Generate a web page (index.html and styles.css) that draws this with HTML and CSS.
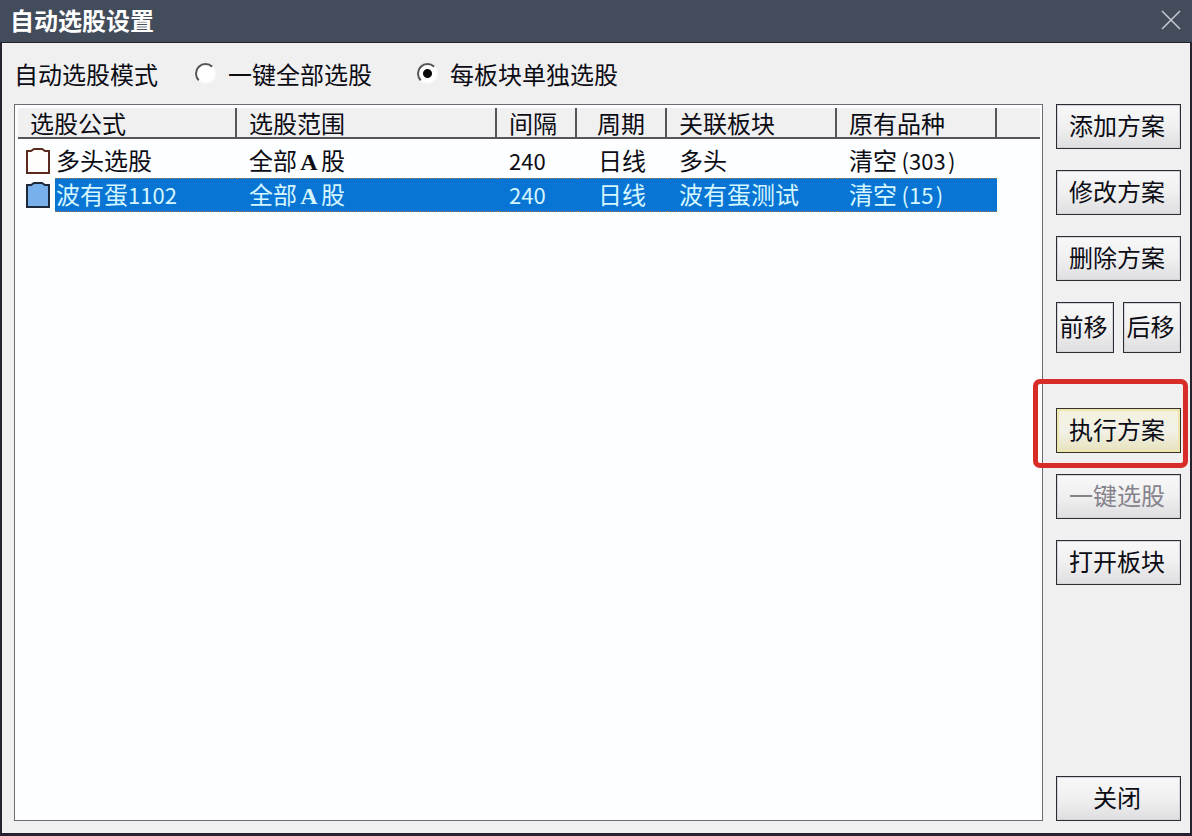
FILE: index.html
```
<!DOCTYPE html>
<html lang="zh-CN">
<head>
    <meta charset="UTF-8">
    <meta name="viewport" content="width=device-width, initial-scale=1.0">
    <title>自动选股设置</title>
    <link rel="stylesheet" href="styles.css">
</head>
<body>
    <div class="titlebar">
        <h1>自动选股设置</h1>
        <button type="button" class="close-icon" aria-label="关闭窗口">
            <svg width="20" height="20" viewBox="0 0 20 20">
                <path d="M1 1L19 19M19 1L1 19" stroke="#c8ccd4" stroke-width="1.5" fill="none"/>
            </svg>
        </button>
    </div>

    <div class="dialog">
        <div class="mode" role="radiogroup" aria-labelledby="mode-label">
            <span id="mode-label" class="mode-label">自动选股模式</span>
            <div class="option">
                <input type="radio" name="mode" id="mode-all">
                <label for="mode-all">一键全部选股</label>
            </div>
            <div class="option">
                <input type="radio" name="mode" id="mode-single" checked>
                <label for="mode-single">每板块单独选股</label>
            </div>
        </div>

        <div class="content">
            <div class="list">
                <table>
                    <colgroup>
                        <col class="col-icon">
                        <col class="col-formula">
                        <col class="col-range">
                        <col class="col-interval">
                        <col class="col-period">
                        <col class="col-block">
                        <col class="col-origin">
                        <col>
                    </colgroup>
                    <thead>
                        <tr>
                            <th colspan="2">选股公式</th>
                            <th>选股范围</th>
                            <th>间隔</th>
                            <th class="center">周期</th>
                            <th>关联板块</th>
                            <th>原有品种</th>
                            <th></th>
                        </tr>
                    </thead>
                    <tbody>
                        <tr>
                            <td class="icon">
                                <svg width="24" height="26" viewBox="0 0 24 26">
                                    <path d="M1 3H5L8 1H16L19 3H23V25H1Z" fill="#fffdfa" stroke="#5a2a1c" stroke-width="2"/>
                                </svg>
                            </td>
                            <td class="name">多头选股</td>
                            <td>全部<span class="wide">A</span>股</td>
                            <td><span class="num">240</span></td>
                            <td class="center">日线</td>
                            <td>多头</td>
                            <td>清空<span class="num"><span class="open">(</span>303<span class="shut">)</span></span></td>
                            <td class="blank"></td>
                        </tr>
                        <tr class="selected">
                            <td class="icon">
                                <svg width="24" height="26" viewBox="0 0 24 26">
                                    <path d="M1 3H5L8 1H16L19 3H23V25H1Z" fill="#77b0ea" stroke="#1c2a3c" stroke-width="2"/>
                                </svg>
                            </td>
                            <td class="name">波有蛋<span class="num">1102</span></td>
                            <td>全部<span class="wide">A</span>股</td>
                            <td><span class="num">240</span></td>
                            <td class="center">日线</td>
                            <td>波有蛋测试</td>
                            <td>清空<span class="num"><span class="open">(</span>15<span class="shut">)</span></span></td>
                            <td class="blank"></td>
                        </tr>
                    </tbody>
                </table>
            </div>

            <div class="actions">
                <button type="button" class="btn">添加方案</button>
                <button type="button" class="btn">修改方案</button>
                <button type="button" class="btn">删除方案</button>
                <div class="move">
                    <button type="button" class="btn">前移</button>
                    <button type="button" class="btn">后移</button>
                </div>
                <div class="run">
                    <button type="button" class="btn btn-run">执行方案</button>
                    <span class="marker"></span>
                </div>
                <button type="button" class="btn" disabled>一键选股</button>
                <button type="button" class="btn">打开板块</button>
                <button type="button" class="btn btn-close">关闭</button>
            </div>
        </div>
    </div>
</body>
</html>
```
FILE: styles.css
```
* {
    box-sizing: border-box;
}
body {
    margin: 0;
    min-height: 100vh;
    display: flex;
    flex-direction: column;
    font-family: "Noto Sans CJK SC", sans-serif;
    font-size: 24px;
    line-height: 32px;
    color: #0c0c14;
    background-color: #f0f0f1;
}
button, input {
    font: inherit;
    color: inherit;
    margin: 0;
    padding: 0;
}

/* Title bar */
.titlebar {
    display: flex;
    align-items: center;
    justify-content: space-between;
    height: 43px;
    padding: 0 11px 3px 10px;
    background-color: #424c5a;
    border-bottom: 1px solid #20242c;
}
.titlebar h1 {
    margin: 0;
    font-size: 24px;
    font-weight: bold;
    color: #fff;
}
.close-icon {
    display: flex;
    border: none;
    background: none;
}

/* Dialog body */
.dialog {
    flex: 1;
    display: flex;
    flex-direction: column;
    padding: 0 9px 12px 12px;
    border: solid #26232e;
    border-width: 0 2px 3px 2px;
}
.mode {
    display: flex;
    align-items: center;
    height: 61px;
}
.mode-label {
    margin-right: 37px;
}
.option {
    display: flex;
    align-items: center;
    gap: 12px;
    margin-right: 45px;
}
input[type="radio"] {
    appearance: none;
    width: 21px;
    height: 21px;
    border: 2px solid;
    border-color: #55555a #fafafa #fafafa #55555a;
    border-radius: 50%;
    background-color: #fff;
}
input[type="radio"]:checked {
    background-image: radial-gradient(circle, #0a0a0a 4px, transparent 5px);
}
.content {
    flex: 1;
    display: flex;
    gap: 13px;
}

/* Scheme list */
.list {
    flex: 1;
    padding: 3px 2px 2px 3px;
    border: 1px solid #6c6c72;
    background-color: #fcfeff;
}
table {
    width: 100%;
    table-layout: fixed;
    border-collapse: separate;
    border-spacing: 0;
}
.col-icon { width: 37px; }
.col-formula { width: 182px; }
.col-range { width: 260px; }
.col-interval { width: 80px; }
.col-period { width: 90px; }
.col-block { width: 170px; }
.col-origin { width: 160px; }
th, td {
    padding: 0 0 0 12px;
    text-align: left;
    white-space: nowrap;
}
th {
    height: 31px;
    font-weight: normal;
    line-height: 29px;
    background-color: #f0f0f1;
    border-right: 2px solid #55555a;
    border-bottom: 2px solid #55555a;
}
th:last-child {
    border-right: none;
}
tbody::before {
    content: "";
    display: table-row;
    height: 5px;
}
td {
    height: 34px;
    line-height: 30px;
    border: 1px dotted transparent;
    border-width: 1px 0;
    vertical-align: top;
}
th.center, td.center {
    padding-left: 0;
    text-align: center;
}
td.icon {
    padding-left: 8px;
    line-height: 0;
    vertical-align: middle;
}
td.name {
    padding-left: 1px;
}
.num {
    font-size: 22px;
    line-height: 22px;
}
.open, .shut {
    display: inline-block;
    width: 12px;
}
.open {
    text-align: right;
}
.shut {
    text-align: center;
}
.wide {
    display: inline-block;
    width: 24px;
    line-height: 24px;
    text-align: center;
    font-family: "Liberation Serif", serif;
    font-weight: bold;
}
.selected td {
    color: #d4f6ff;
    background-color: #0874d4;
    border-color: #a07850;
}
.selected td.icon, .selected td.blank {
    background: none;
    border-color: transparent;
}

/* Buttons on the right */
.actions {
    width: 125px;
    display: flex;
    flex-direction: column;
    gap: 21px;
}
.btn {
    width: 100%;
    height: 45px;
    padding: 0 3px 3px 0;
    border: 1px solid #2c2c34;
    background: linear-gradient(#f8f8f9, #f0f0f1 50%, #dedee0);
    box-shadow: inset 0 0 0 1px #d4d4d8;
    white-space: nowrap;
}
.btn:disabled {
    color: #85828c;
}
.move {
    display: flex;
    gap: 9px;
}
.move .btn {
    height: 51px;
}
.run {
    position: relative;
    display: flex;
    margin-top: 34px;
}
.btn-run {
    border-color: #34322c;
    background: linear-gradient(#f4f2dc, #f2f1e8 50%, #e6e2bc);
    box-shadow: inset 0 0 0 2px #efe6ae;
}
/* Red frame around the run button */
.marker {
    position: absolute;
    inset: -29px -7px -15px -23px;
    border: 5px solid #d82c28;
    border-radius: 7px;
    pointer-events: none;
}
.btn-close {
    margin-top: auto;
}
```
